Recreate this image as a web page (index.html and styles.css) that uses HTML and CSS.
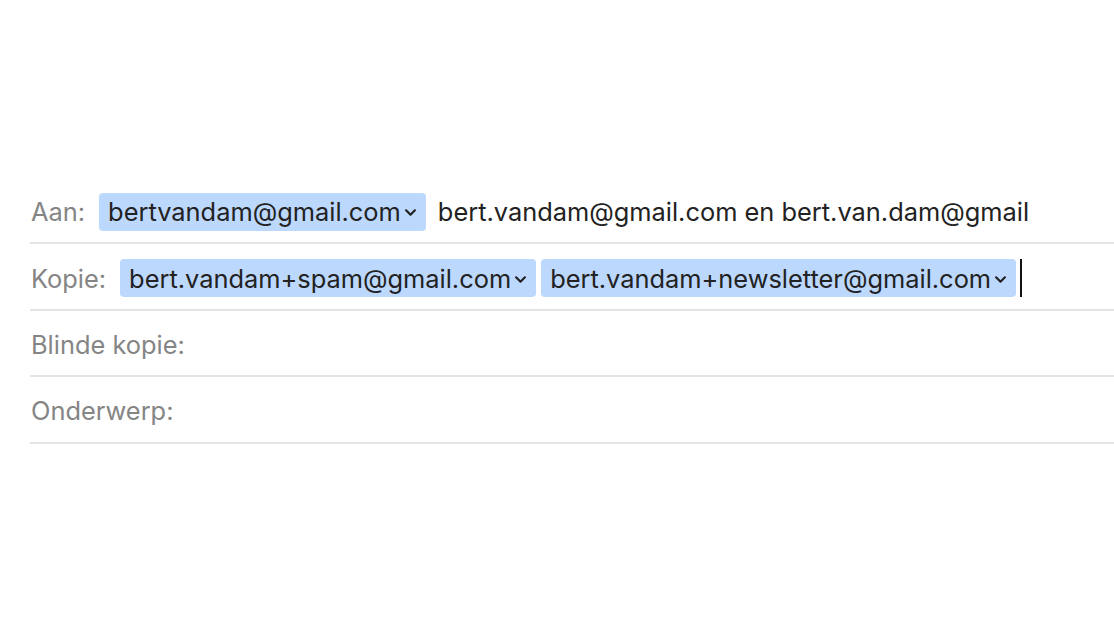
FILE: index.html
```html
<!DOCTYPE html>
<html lang="nl">
<head>
  <meta charset="UTF-8" />
  <meta name="viewport" content="width=device-width, initial-scale=1.0" />
  <title>Nieuw bericht</title>
  <link rel="stylesheet" href="styles.css">
</head>
<body>
  <div class="compose">
    <div class="field">
      <span class="label">Aan:</span>
      <span class="chip">bertvandam@gmail.com<svg class="chevron" viewBox="0 0 10 6"><path d="M1 1l4 4 4-4" /></svg></span>
      <span class="typed">bert.vandam@gmail.com en bert.van.dam@gmail</span>
    </div>
    <div class="field">
      <span class="label">Kopie:</span>
      <span class="chip">bert.vandam+spam@gmail.com<svg class="chevron" viewBox="0 0 10 6"><path d="M1 1l4 4 4-4" /></svg></span>
      <span class="chip">bert.vandam+newsletter@gmail.com<svg class="chevron" viewBox="0 0 10 6"><path d="M1 1l4 4 4-4" /></svg></span>
      <span class="caret"></span>
    </div>
    <div class="field">
      <span class="label">Blinde kopie:</span>
    </div>
    <div class="field">
      <span class="label">Onderwerp:</span>
    </div>
  </div>
</body>
</html>
```

FILE: styles.css
```css
body {
  margin: 0;
  background: #fff;
  font-family: Inter, "Noto Sans", sans-serif;
  font-size: 25.4px;
  color: #222;
}
.compose {
  padding-top: 178px;
  margin-left: 30px;
}
.field {
  display: flex;
  align-items: center;
  height: 66.4px;
  padding-top: 3px;
  border-bottom: 2px solid #e4e4e4;
  box-sizing: border-box;
  white-space: nowrap;
  overflow: hidden;
}
.label {
  color: #858585;
  padding-left: 1px;
  margin-right: 14px;
}
.chip {
  display: inline-flex;
  align-items: center;
  height: 38px;
  padding: 0 10px 0 9px;
  margin-right: 5px;
  background: #bdd8fd;
  border-radius: 4px;
}
.chevron {
  width: 11px;
  height: 7px;
  margin-left: 4px;
  margin-top: 2px;
  fill: none;
  stroke: #222;
  stroke-width: 2;
  stroke-linecap: round;
  stroke-linejoin: round;
}
.typed {
  margin-left: 7px;
}
.caret {
  width: 2px;
  height: 38px;
  background: #111;
  margin-left: -1px;
}
```
